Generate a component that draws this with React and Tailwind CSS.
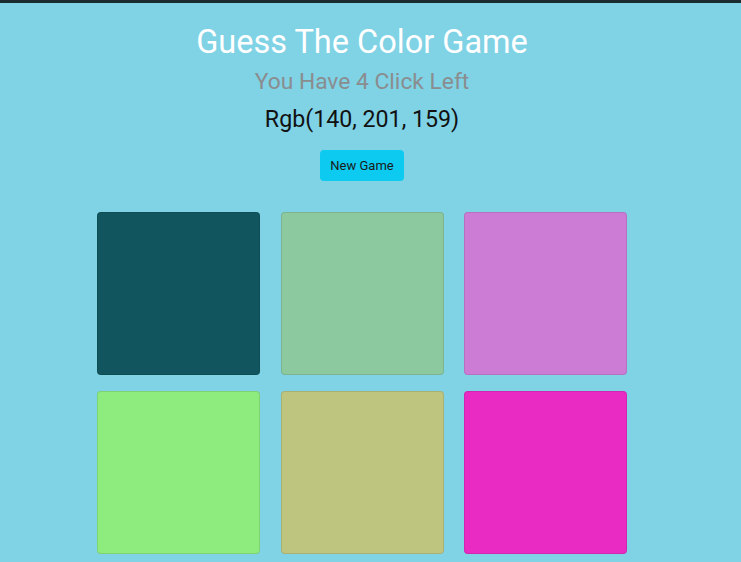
const tiles = [
  'bg-[#11565e]',
  'bg-[#8cc99f]',
  'bg-[#cd7cd6]',
  'bg-[#8eeb7e]',
  'bg-[#bec57f]',
  'bg-[#e92bc3]',
]

export default function App() {
  return (
    <div className="min-h-[562px] bg-[#80d2e5] font-['Roboto',sans-serif] overflow-hidden">
      <div className="h-[3px] bg-[#1b2a2e]" />
      <div className="w-[724px] flex flex-col items-center">
        <h1 className="mt-[20px] h-[38px] text-[32.5px] leading-[38px] text-white">Guess The Color Game</h1>
        <p className="mt-[8px] h-[26px] text-[22.8px] leading-[26px] text-[#8a8d8f]">You Have 4 Click Left</p>
        <p className="mt-[11px] h-[26px] text-[23.2px] leading-[26px] text-[#111]">Rgb(140, 201, 159)</p>
        <button className="mt-[18px] w-[84px] h-[31px] rounded bg-[#0dcaf0] text-[13px] text-[#1a1a1a]">New Game</button>
        <div className="mt-[31px] grid grid-cols-[163px_163px_163px] gap-x-[20.5px] gap-y-[16px]">
          {tiles.map((c, i) => (
            <div key={i} className={`w-[163px] h-[163px] rounded border border-black/10 ${c}`} />
          ))}
        </div>
      </div>
    </div>
  )
}
